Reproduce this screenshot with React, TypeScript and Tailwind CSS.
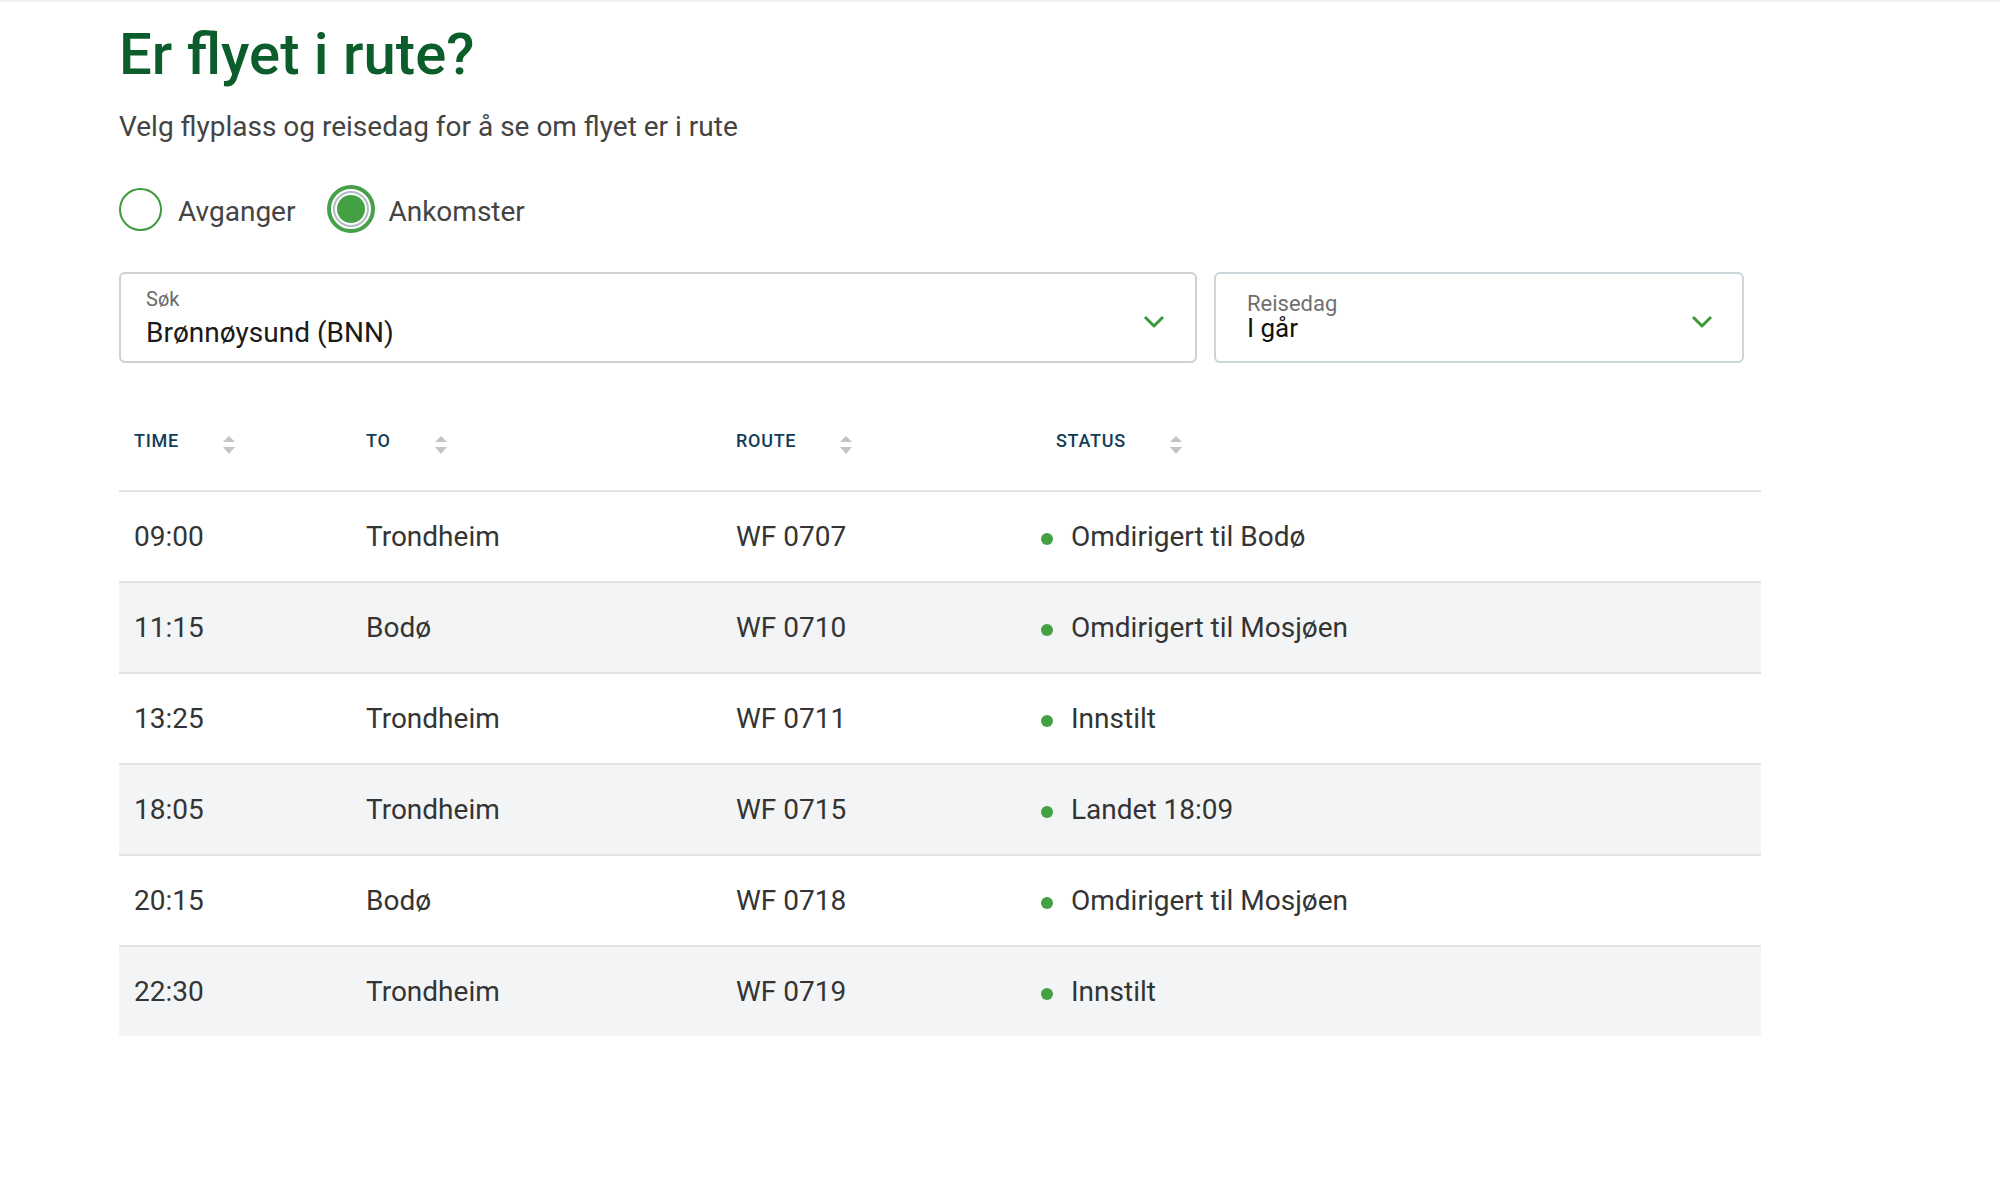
import { useState } from "react";

type Flight = { time: string; to: string; route: string; status: string };

const flights: Flight[] = [
  { time: "09:00", to: "Trondheim", route: "WF 0707", status: "Omdirigert til Bodø" },
  { time: "11:15", to: "Bodø", route: "WF 0710", status: "Omdirigert til Mosjøen" },
  { time: "13:25", to: "Trondheim", route: "WF 0711", status: "Innstilt" },
  { time: "18:05", to: "Trondheim", route: "WF 0715", status: "Landet 18:09" },
  { time: "20:15", to: "Bodø", route: "WF 0718", status: "Omdirigert til Mosjøen" },
  { time: "22:30", to: "Trondheim", route: "WF 0719", status: "Innstilt" },
];

const cols = "grid grid-cols-[232px_370px_320px_1fr]";

function SortIcon() {
  return (
    <svg width="12" height="18" viewBox="0 0 12 18" className="ml-[44px] shrink-0">
      <path d="M6 0 L12 6 H0 Z" fill="#c4c4c4" />
      <path d="M0 11 H12 L6 18 Z" fill="#c4c4c4" />
    </svg>
  );
}

function Chevron() {
  return (
    <svg width="22" height="14" viewBox="0 0 22 14" className="shrink-0 mt-[9px]">
      <polyline points="2,2 11,11 20,2" fill="none" stroke="#3c9a3c" strokeWidth="3" strokeLinejoin="round" />
    </svg>
  );
}

function HeaderCell({ label }: { label: string }) {
  return (
    <div className="flex items-center pl-[15px]">
      <span className="pb-[8px] text-[18px] leading-[18px] font-medium tracking-[0.04em] text-[#123d57]">
        {label}
      </span>
      <SortIcon />
    </div>
  );
}

function Radio({ checked }: { checked: boolean }) {
  if (checked) {
    return (
      <span className="flex h-[48px] w-[48px] items-center justify-center rounded-full border-[4px] border-[#47a047]">
        <span className="flex h-[36px] w-[36px] items-center justify-center rounded-full border-2 border-[#b3bec2] bg-white">
          <span className="h-[28px] w-[28px] rounded-full bg-[#43a043]" />
        </span>
      </span>
    );
  }
  return <span className="h-[43px] w-[43px] rounded-full border-2 border-[#3d9b3d] bg-white" />;
}

export default function App() {
  const [mode, setMode] = useState<"dep" | "arr">("arr");

  return (
    <div className="min-h-screen w-full bg-white font-[Roboto,Arial,sans-serif]">
      <div className="h-[2px] bg-[#efefef]" />
      <div className="ml-[119px] w-[1642px] pt-[23px]">
        <h1 className="text-[58px] leading-[58px] font-medium text-[#0b5d2b]">Er flyet i rute?</h1>
        <p className="mt-[30px] text-[28px] leading-[28px] text-[#444444]">
          Velg flyplass og reisedag for å se om flyet er i rute
        </p>

        <div className="mt-[44px] flex h-[48px] items-center">
          <button onClick={() => setMode("dep")} className="flex items-center">
            <Radio checked={mode === "dep"} />
            <span className="ml-[16px] pt-[6px] text-[28px] leading-[28px] text-[#444444]">Avganger</span>
          </button>
          <button onClick={() => setMode("arr")} className="ml-[32px] flex items-center">
            <Radio checked={mode === "arr"} />
            <span className="ml-[13px] pt-[6px] text-[28px] leading-[28px] text-[#444444]">Ankomster</span>
          </button>
        </div>

        <div className="mt-[39px] flex gap-[17px] pr-[17px]">
          <div className="flex h-[91px] flex-1 items-center rounded-[6px] border-2 border-[#d0d0d0] pl-[25px] pr-[30px]">
            <div className="flex-1">
              <div className="text-[20px] leading-[20px] text-[#6b6b6b]">Søk</div>
              <div className="mt-[10px] text-[28px] leading-[28px] text-[#1a1a1a]">Brønnøysund (BNN)</div>
            </div>
            <Chevron />
          </div>
          <div className="flex h-[91px] w-[530px] items-center rounded-[6px] border-2 border-[#cbd5da] pl-[31px] pr-[29px]">
            <div className="-mt-[2px] flex-1">
              <div className="text-[22px] leading-[22px] text-[#707070]">Reisedag</div>
              <div className="text-[26px] leading-[26px] text-[#111111]">I går</div>
            </div>
            <Chevron />
          </div>
        </div>

        <div className="mt-[37px]">
          <div className={`${cols} h-[90px]`}>
            <HeaderCell label="TIME" />
            <HeaderCell label="TO" />
            <HeaderCell label="ROUTE" />
            <HeaderCell label="STATUS" />
          </div>
          {flights.map((f, i) => (
            <div
              key={f.route}
              className={`${cols} h-[91px] items-center border-t-2 border-[#e3e3e3] text-[28px] leading-[28px] text-[#343434] ${
                i % 2 === 1 ? "bg-[#f3f4f6]" : "bg-white"
              }`}
            >
              <div className="pl-[15px]">{f.time}</div>
              <div className="pl-[15px]">{f.to}</div>
              <div className="pl-[15px]">{f.route}</div>
              <div className="flex items-center">
                <span className="mt-[4px] h-[12px] w-[12px] rounded-full bg-[#43a043]" />
                <span className="ml-[18px]">{f.status}</span>
              </div>
            </div>
          ))}
        </div>
      </div>
    </div>
  );
}
